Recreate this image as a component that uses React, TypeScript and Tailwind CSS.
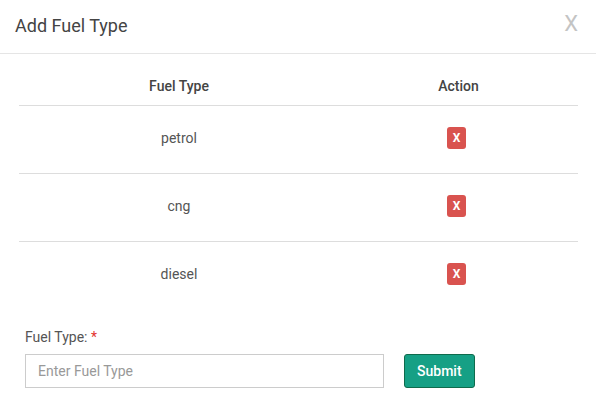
import { useState } from 'react';

const initialFuels = ['petrol', 'cng', 'diesel'];

const App = () => {
  const [fuels, setFuels] = useState<string[]>(initialFuels);
  const [value, setValue] = useState('');

  const addFuel = () => {
    if (!value.trim()) return;
    setFuels([...fuels, value.trim()]);
    setValue('');
  };

  return (
    <div className="w-[596px] h-[406px] bg-white font-['Roboto',sans-serif] text-[#333]">
      <div className="flex items-center justify-between h-[54px] pl-[15px] pr-[18px] pb-[3px] border-b border-[#e5e5e5]">
        <h4 className="text-[18px] text-[#444]">Add Fuel Type</h4>
        <button className="text-[22px] leading-none text-[#c4c4c4] font-['Roboto',sans-serif] pb-[3px]">X</button>
      </div>

      <div className="px-[19px] pt-[14px]">
        <table className="w-[559px] border-collapse text-[14px]">
          <thead>
            <tr className="border-b border-[#ddd]">
              <th className="w-[320px] h-[37px] font-medium text-[#444] text-center align-middle">Fuel Type</th>
              <th className="font-medium text-[#444] text-center align-middle">Action</th>
            </tr>
          </thead>
          <tbody>
            {fuels.map((f, i) => (
              <tr key={f + i} className={i < fuels.length - 1 ? 'border-b border-[#ddd]' : ''}>
                <td className="h-[68px] text-center text-[#555] align-middle pb-[2px]">{f}</td>
                <td className="text-center align-middle pr-[4px] pb-[2px]">
                  <button
                    onClick={() => setFuels(fuels.filter((_, j) => j !== i))}
                    className="w-[19px] h-[22px] rounded-[3px] bg-[#d9534f] text-white text-[12px] font-bold leading-none"
                  >
                    X
                  </button>
                </td>
              </tr>
            ))}
          </tbody>
        </table>
      </div>

      <div className="px-[25px] pt-[18px]">
        <label className="block text-[14px] text-[#555] mb-[6px]">
          Fuel Type: <span className="text-[#e3342f]">*</span>
        </label>
        <div className="flex items-center gap-[20px]">
          <input
            value={value}
            onChange={(e) => setValue(e.target.value)}
            placeholder="Enter Fuel Type"
            className="w-[359px] h-[34px] px-[12px] border border-[#ccc] text-[14px] text-[#555] placeholder:text-[#999] outline-none"
          />
          <button
            onClick={addFuel}
            className="h-[34px] px-[12px] rounded-[3px] bg-[#16a085] border border-[#0f6b4c] text-white text-[14px] font-medium"
          >
            Submit
          </button>
        </div>
      </div>
    </div>
  );
};

export default App;
